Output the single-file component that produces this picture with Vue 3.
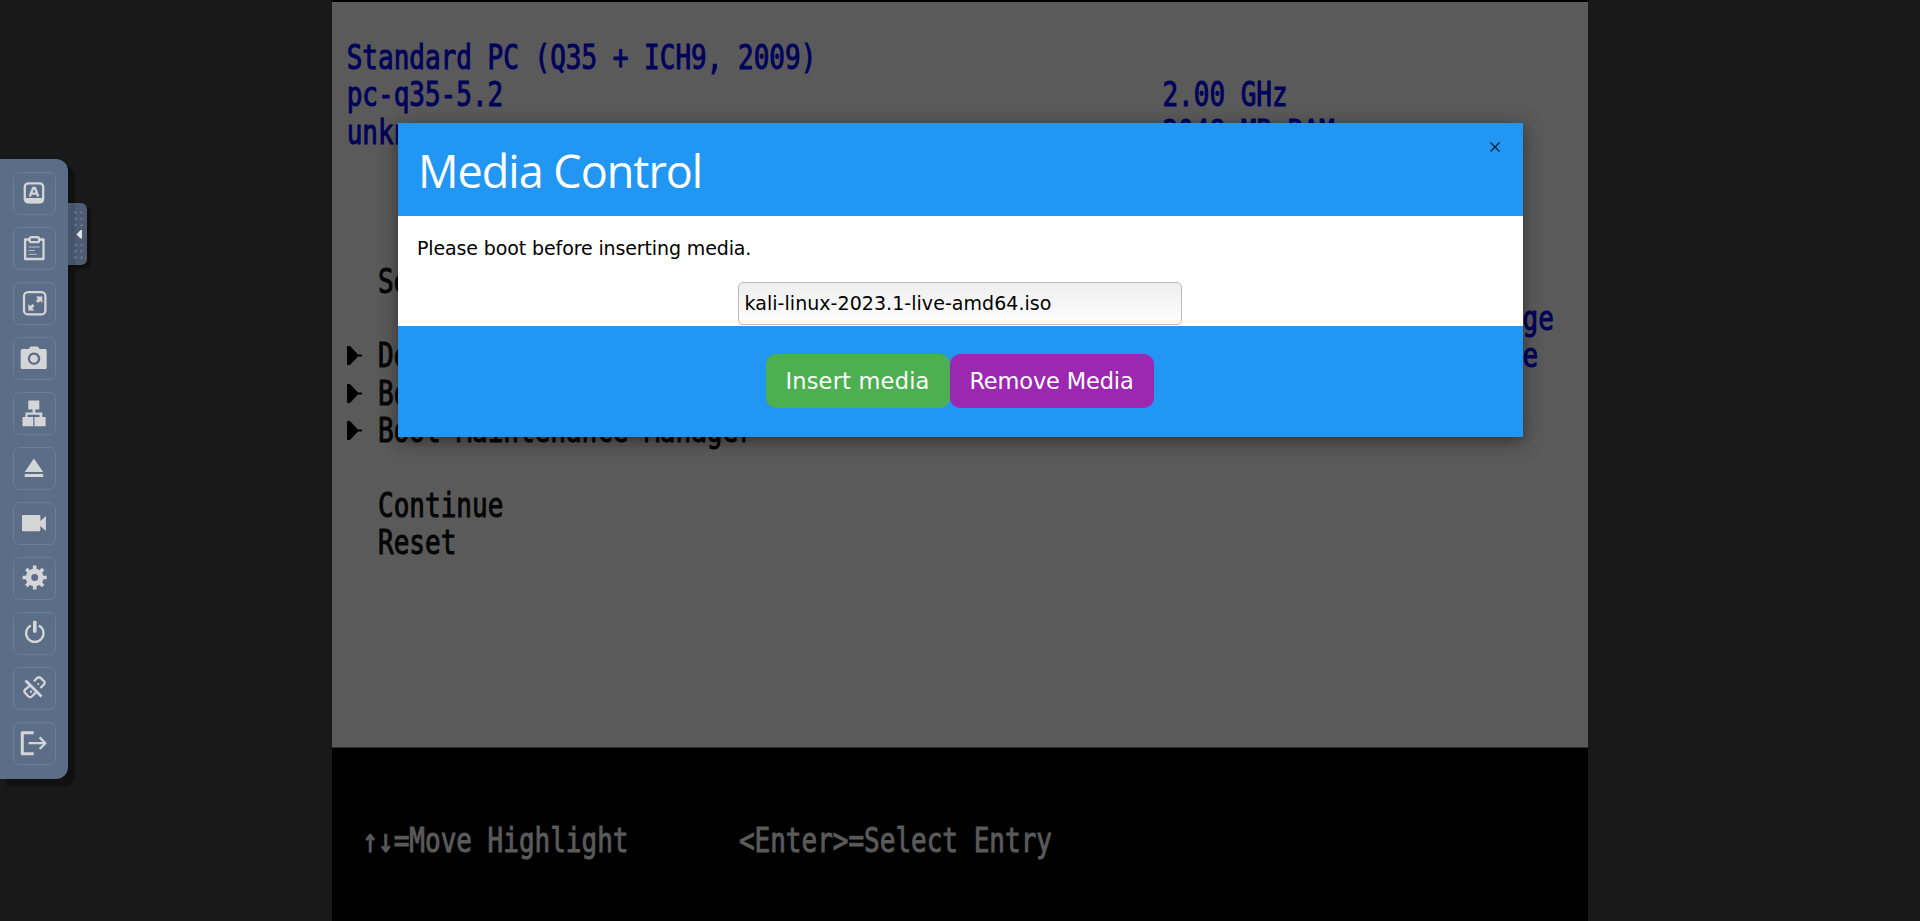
<script setup>
const tools = ['keys', 'clipboard', 'fullscreen', 'camera', 'network', 'eject', 'video', 'settings', 'power', 'disconnect', 'exit']

const rows = [
  [],
  [{ col: 1, text: 'Standard PC (Q35 + ICH9, 2009)', tone: 'blue' }],
  [{ col: 1, text: 'pc-q35-5.2', tone: 'blue' }, { col: 53, text: '2.00 GHz', tone: 'blue' }],
  [{ col: 1, text: 'unknown', tone: 'blue' }, { col: 53, text: '2048 MB RAM', tone: 'blue' }],
  [], [], [],
  [{ col: 3, text: 'Select Language', tone: 'black' }],
  [{ col: 57, text: 'one adjusts to change', tone: 'blue' }],
  [{ col: 1, arrow: true }, { col: 3, text: 'Device Manager', tone: 'black' }, { col: 57, text: 'the language for the', tone: 'blue' }],
  [{ col: 1, arrow: true }, { col: 3, text: 'Boot Manager', tone: 'black' }],
  [{ col: 1, arrow: true }, { col: 3, text: 'Boot Maintenance Manager', tone: 'black' }],
  [],
  [{ col: 3, text: 'Continue', tone: 'black' }],
  [{ col: 3, text: 'Reset', tone: 'black' }],
  [], [], [], [], [], [], [],
  [{ col: 2, text: '↑↓=Move Highlight', tone: 'grey' }, { col: 26, text: '<Enter>=Select Entry', tone: 'grey' }],
]
</script>

<template>
  <div class="page">
    <main class="console">
      <div v-for="(row, r) in rows" :key="r" class="row">
        <template v-for="(cell, c) in row" :key="c">
          <svg v-if="cell.arrow" class="marker" :style="{ gridColumnStart: cell.col + 1 }" viewBox="0 0 16 20"><path d="M0 0h3l8 8.5h4v2h-4L3 19H0z" /></svg>
          <span v-else class="cell" :class="cell.tone" :style="{ gridColumn: `${cell.col + 1} / span ${cell.text.length}` }">{{ cell.text }}</span>
        </template>
      </div>
    </main>

    <aside class="dock">
      <nav class="bar">
        <button v-for="t in tools" :key="t" class="tool" :aria-label="t">
          <svg v-if="t === 'keys'" viewBox="0.500 0 26 26"><rect x="3.300" y="3.300" width="18.400" height="19" rx="3.500" class="line" /><path d="M3 18h19v2.500q0 2.700-3 2.700H6q-3 0-3-2.700z" /><path d="M8.300 16.500 11.600 8h1.900l3.300 8.500M9.800 13.700h5.600" class="line" /></svg>
          <svg v-else-if="t === 'clipboard'" viewBox="0.300 0 26 26"><path d="M8 4.500H3.400V24h18.400V4.500H17" class="line" /><rect x="8" y="2.200" width="9.400" height="5" rx="1.800" class="line" /><path d="M7 12h11M7 15.500h6M7 19.300h8" class="line thin" /></svg>
          <svg v-else-if="t === 'fullscreen'" viewBox="0.200 0 26 26"><rect x="2.200" y="2.200" width="21.400" height="22.200" rx="4" class="line" /><path d="M14 6.500h6.500V13l-2-2-2.200 2.100-2.300-2.300L16.200 9zM6.500 14l2 2 2.200-2.100 2 2.200-2.200 2.200 2.200 2.200H6.500z" /></svg>
          <svg v-else-if="t === 'camera'" viewBox="1.300 0 26 26"><path fill-rule="evenodd" d="M2 4h6l2-2.500h7L19 4h5.500q1.500 0 1.500 1.500v17q0 1.500-1.500 1.500H1.500Q0 24 0 22.500v-17Q0 4 2 4zM13.300 7.500a6.200 6.200 0 1 0 .1 0zM13.300 9.800a4 4 0 1 1-.1 0z" /></svg>
          <svg v-else-if="t === 'network'" viewBox="1.500 0 26 26"><path d="M7.800.5h11v9h-4v3h7V17h3.300v9.200H14V17h5v-2.200H7V17h5.800v9.200H2V17h3v-4.500h7v-3H7.800z" /></svg>
          <svg v-else-if="t === 'eject'" viewBox="1.300 0 26 26"><path d="M13.200 3.500 22.500 17H4zM4 19h18.500v3H4z" /></svg>
          <svg v-else-if="t === 'video'" viewBox="1.300 0 26 26"><path d="M2.500 5h16q1.200 0 1.200 1.200V11l5.500-5v15l-5.500-5v4q0 1.200-1.200 1.200h-16q-1.200 0-1.200-1.200V6.200Q1.300 5 2.500 5z" /></svg>
          <svg v-else-if="t === 'settings'" viewBox="1.300 0.500 26 26"><circle cx="14" cy="13" r="6.200" class="ring" /><path d="M14 1v5M14 20v5M2 13h5M21 13h5M5.600 4.600l3.600 3.600M18.800 17.800l3.600 3.600M5.600 21.400l3.600-3.600M18.800 8.200l3.600-3.600" class="teeth" /></svg>
          <svg v-else-if="t === 'power'" viewBox="1.200 0.300 26 26"><path d="M10 5.800a8.700 8.700 0 1 0 8 0" class="line" /><rect x="12.200" y="1" width="3.600" height="12" rx="1" /></svg>
          <svg v-else-if="t === 'disconnect'" viewBox="1 0 26 26"><path d="M13 6.200l3.300-3.300q1.700-1.300 3.300 0l3.300 3.200q1.500 1.700 0 3.400L19.500 13M10 9.800 4.200 14.500q-1.700 1.700 0 3.500l3.300 3.500q1.700 1.500 3.400 0l4.600-4.800M9 16.500l2 .5" class="line" /><path d="M4.500 5.500 20.500 21.500" class="line slash" /><circle cx="17.300" cy="9" r="1" /></svg>
          <svg v-else viewBox="1.900 0.300 26 26"><path d="M13.600 3H2.200v21h11.400" class="line heavy" /><path d="M8.500 13.500h17M19.500 7.700l5.800 5.800-5.800 5.800" class="line" /></svg>
        </button>
      </nav>
      <button class="handle" aria-label="collapse"><svg viewBox="0 0 19 62"><g class="dots"><circle v-for="n in 12" :key="n" :cx="n % 2 ? 7.500 : 13.500" :cy="9.500 + Math.floor((n - 1) / 2) * 6.300 + (n > 6 ? 13.500 : 0)" r="1.200" /></g><path class="tip" d="M14 27v8.500h-1.500L8.500 31.400 12.500 27z" /></svg></button>
    </aside>

    <section class="modal">
      <header class="head"><h2>Media Control</h2><svg class="close" viewBox="0 0 10 10"><path d="M.5.5l9 9M9.500.5l-9 9" /></svg></header>
      <div class="body"><p>Please boot before inserting media.</p><div class="select"><span>kali-linux-2023.1-live-amd64.iso</span></div></div>
      <footer class="foot"><button class="btn insert"><span>Insert media</span></button><button class="btn remove"><span>Remove Media</span></button></footer>
    </section>
  </div>
</template>

<style>
body { margin: 0; overflow: hidden; background: #191919; }
</style>

<style scoped>
.page { position: relative; width: 1920px; height: 921px; overflow: hidden; background: #191919; font-family: "DejaVu Sans", Verdana, sans-serif; }
.page * { box-sizing: border-box; }
button { border: 0; padding: 0; font: inherit; }

.console { width: 1256px; height: 921px; margin: 0 auto; padding-top: 2px; background: linear-gradient(#000 0 2px, #5a5a5a 2px 747px, #303030 747px 748px, #000 748px); }
.row { display: grid; grid-template-columns: repeat(80, 15.700px); grid-template-rows: 37.300px; height: 37.300px; margin-left: -1px; align-items: center; }
.cell { grid-row: 1; white-space: pre; padding-top: 1px; font: 26px/37px "DejaVu Sans Mono", monospace; transform: scaleY(1.270); -webkit-text-stroke: .8px currentColor; }
.blue { color: #00005b; }
.black { color: #050505; }
.grey { color: #5a5a5a; }
.marker { grid-row: 1; width: 16px; height: 20px; fill: #000; }

.dock { position: absolute; left: 0; top: 159px; display: flex; align-items: flex-start; }
.bar { width: 68px; height: 620px; padding: 13px 0 0 13px; display: flex; flex-direction: column; gap: 12.200px; background: #5c6e87; border-radius: 0 12px 12px 0; box-shadow: 7px 7px 2px #101010; z-index: 0; }
.tool { flex: none; display: grid; place-items: center; width: 43px; height: 42.800px; border: 1px solid #6c7d94; border-radius: 7px; background: transparent; }
.tool svg { width: 26px; height: 26px; fill: #d3d5d7; overflow: visible; }
.tool .line { fill: none; stroke: #d3d5d7; stroke-width: 2.300; stroke-linejoin: round; }
.tool .heavy { stroke-width: 3; }
.tool .thin { stroke-width: 1; stroke: #b8c0ca; }
.tool .slash { stroke-width: 2.800; }
.ring { fill: none; stroke: #d3d5d7; stroke-width: 5.500; }
.teeth { stroke: #d3d5d7; stroke-width: 3.600; }
.handle { width: 19px; height: 62px; margin-top: 44px; background: linear-gradient(90deg, #46546a 0 7px, #4d5c73 8px); border-radius: 0 6px 6px 0; box-shadow: 4px 4px 2px #101010; z-index: 1; }
.handle svg { display: block; width: 19px; height: 62px; }
.dots { fill: #6b7a90; }
.tip { fill: #e2e2e2; }

.modal { position: absolute; left: 398px; top: 123px; width: 1125px; display: flex; flex-direction: column; box-shadow: 0 4px 10px rgba(0, 0, 0, .2), 0 4px 20px rgba(0, 0, 0, .3); }
.head { height: 93px; padding: 0 23px 0 20px; display: flex; justify-content: space-between; background: #2196f3; }
h2 { margin: 0; color: #fff; font: 400 45px/96px "Open Sans", "Noto Sans", sans-serif; letter-spacing: -1px; white-space: nowrap; }
.close { width: 10px; height: 10px; margin-top: 19px; fill: none; stroke: #10253a; stroke-width: 1.400; }
.body { height: 110px; padding: 21px 21px 0 19px; display: flex; flex-direction: column; align-items: center; background: #fff; color: #000; }
p { align-self: flex-start; margin: 0 0 22px; font-size: 19px; line-height: 23px; letter-spacing: -.120px; }
.select { width: 444px; height: 43px; padding: 0 0 2px 6px; flex: none; display: flex; align-items: center; border: 1px solid #bbb; border-radius: 5px; background: linear-gradient(#eee, #fff); font-size: 19px; letter-spacing: .050px; }
.foot { height: 111px; padding-right: 2px; display: flex; justify-content: center; align-items: center; background: #2196f3; }
.btn { height: 54px; margin-top: -2px; border-radius: 10px; color: #fff; font-size: 22.500px; }
.insert { width: 184px; background: #4caf50; letter-spacing: .200px; }
.remove { width: 204px; background: #9c27b0; letter-spacing: -.150px; }
</style>
